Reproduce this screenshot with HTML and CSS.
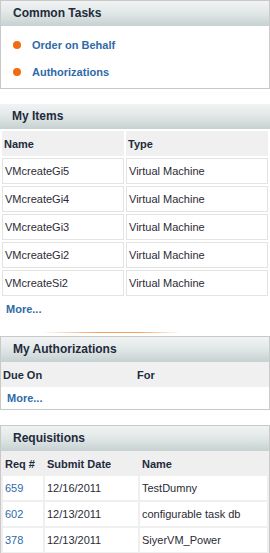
FILE: index.html
```html
<!DOCTYPE html>
<html lang="en">
  <head>
    <meta charset="UTF-8" />
    <title>Home</title>
    <link rel="stylesheet" href="styles.css">
  </head>

  <body>
    <div class="panel boxed">
      <div class="panel-head">Common Tasks</div>
      <ul class="tasks">
        <li><span class="dot"></span><a href="#">Order on Behalf</a></li>
        <li><span class="dot"></span><a href="#">Authorizations</a></li>
      </ul>
    </div>

    <div class="panel items-panel">
      <div class="panel-head">My Items</div>
      <table class="grid items">
        <tr><th class="col-name">Name</th><th>Type</th></tr>
        <tr><td>VMcreateGi5</td><td>Virtual Machine</td></tr>
        <tr><td>VMcreateGi4</td><td>Virtual Machine</td></tr>
        <tr><td>VMcreateGi3</td><td>Virtual Machine</td></tr>
        <tr><td>VMcreateGi2</td><td>Virtual Machine</td></tr>
        <tr><td>VMcreateSi2</td><td>Virtual Machine</td></tr>
      </table>
      <a class="more" href="#">More...</a>
    </div>

    <div class="divider"></div>

    <div class="panel boxed auth-panel">
      <div class="panel-head">My Authorizations</div>
      <div class="auth-cols">
        <span class="col-due">Due On</span>
        <span>For</span>
      </div>
      <a class="more" href="#">More...</a>
    </div>

    <div class="panel boxed req-panel">
      <div class="panel-head">Requisitions</div>
      <table class="grid reqs">
        <tr><th class="col-req">Req #</th><th class="col-date">Submit Date</th><th>Name</th></tr>
        <tr><td><a href="#">659</a></td><td>12/16/2011</td><td>TestDumny</td></tr>
        <tr><td><a href="#">602</a></td><td>12/13/2011</td><td>configurable task db</td></tr>
        <tr><td><a href="#">378</a></td><td>12/13/2011</td><td>SiyerVM_Power</td></tr>
      </table>
    </div>
  </body>
</html>
```

FILE: styles.css
```css
* {
  box-sizing: border-box;
  margin: 0;
  padding: 0;
}

body {
  font-family: "Liberation Sans", Arial, sans-serif;
  font-size: 11px;
  color: #2b2b35;
  background: #fff;
  width: 270px;
  overflow: hidden;
}

a {
  color: #2f6aa8;
  text-decoration: none;
}

.panel {
  width: 270px;
}

.boxed {
  border: 1px solid #c9c9c9;
}

.panel-head {
  height: 25px;
  line-height: 25px;
  padding-left: 12px;
  font-size: 12px;
  font-weight: 700;
  color: #1e2b3c;
  background: linear-gradient(to bottom, #f1f3f3 0%, #e2e8e8 45%, #c7d1d1 100%);
}

/* common tasks */
.tasks {
  list-style: none;
  padding: 5px 0 3px;
}

.tasks li {
  display: flex;
  align-items: center;
  height: 27px;
  padding-left: 12px;
}

.tasks a {
  font-weight: 700;
}

.dot {
  width: 8px;
  height: 8px;
  border-radius: 50%;
  background: #f36b10;
  margin-right: 11px;
}

/* tables */
.grid {
  width: 100%;
  border-collapse: separate;
  border-spacing: 2px;
}

.grid th {
  text-align: left;
  font-weight: 700;
  color: #1e2b3c;
  background: #f0f0f0;
  padding: 0 2px;
}

.items-panel {
  margin-top: 15px;
}

.items th {
  height: 25px;
}

.items .col-name {
  width: 122px;
}

.items td {
  height: 26px;
  border: 1px solid #e3e3e3;
  padding: 0 2px;
}

.more {
  display: block;
  font-weight: 700;
  padding-left: 6px;
  line-height: 20px;
}

.items-panel .more {
  margin-top: 1px;
  margin-bottom: 13px;
}

.divider {
  height: 1px;
  width: 140px;
  margin-left: 41px;
  margin-bottom: 3px;
  background: linear-gradient(to right, rgba(245, 150, 80, 0) 0%, #f7a060 40%, #f5a262 70%, rgba(245, 160, 90, 0) 100%);
}

/* authorizations */
.auth-cols {
  display: flex;
  height: 25px;
  align-items: center;
  background: #f0f0f0;
  font-weight: 700;
  color: #1e2b3c;
  padding-left: 2px;
}

.col-due {
  width: 134px;
}

.auth-panel .more {
  line-height: 22px;
}

/* requisitions */
.req-panel {
  margin-top: 15px;
  border-bottom: none;
}

.reqs {
  background: #efefef;
}

.reqs th {
  height: 21px;
  background: transparent;
}

.reqs td {
  height: 24px;
  background: #fff;
  padding: 0 2px;
}

.reqs .col-req {
  width: 40px;
}

.reqs .col-date {
  width: 93px;
}
```
